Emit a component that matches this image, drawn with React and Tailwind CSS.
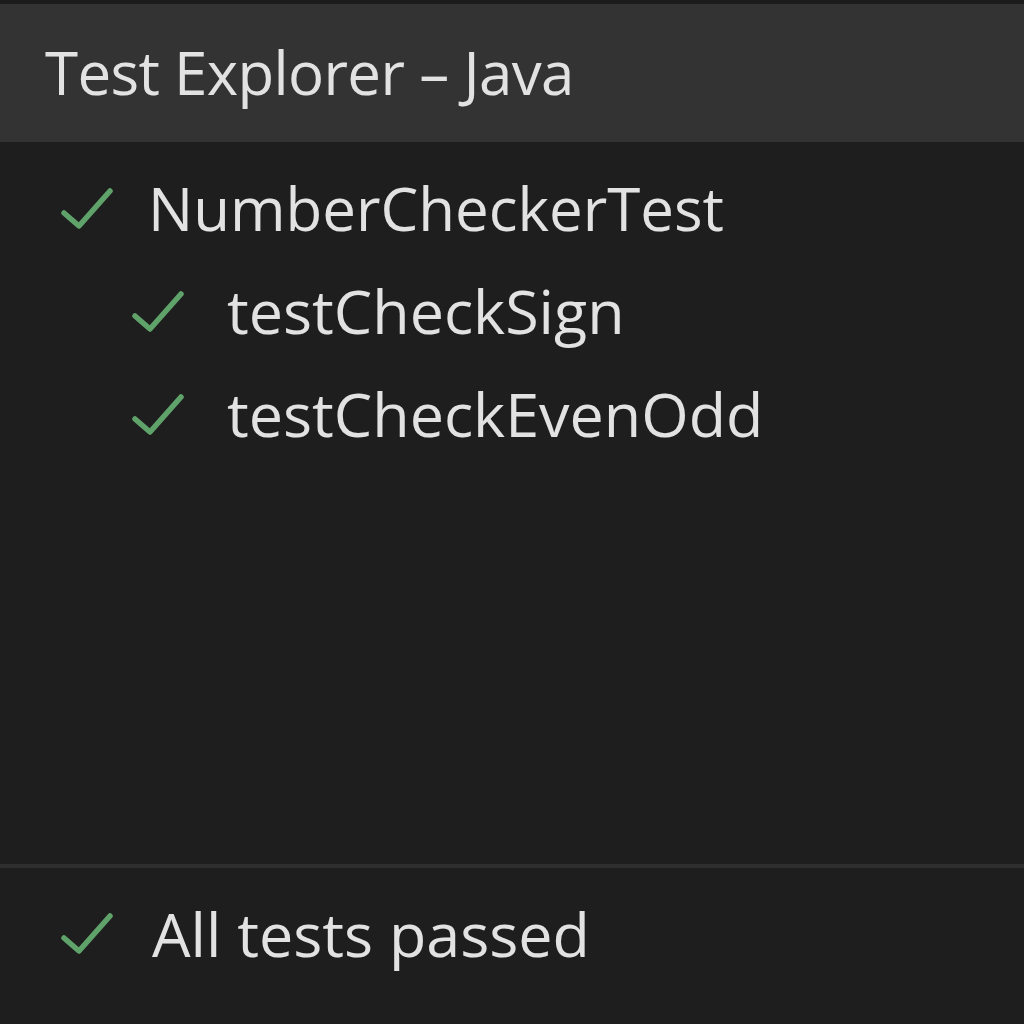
import React from "react";

const Check = ({ className }) => (
  <svg viewBox="0 0 54 42" className={className} fill="none">
    <path
      d="M4 26 L19 39 L50 4"
      stroke="#5fa36a"
      strokeWidth="5.5"
      strokeLinecap="round"
      strokeLinejoin="round"
    />
  </svg>
);

const tests = [
  { name: "testCheckSign" },
  { name: "testCheckEvenOdd" },
];

const App = () => {
  return (
    <div
      className="h-[1024px] w-[1024px] flex flex-col bg-[#1e1e1e] text-[#e2e2e2] overflow-hidden"
      style={{ fontFamily: '"Open Sans", "Noto Sans", sans-serif' }}
    >
      {/* Header */}
      <div className="border-t-4 border-[#1c1c1c] bg-[#333333] h-[142px] flex items-center pl-[45px]">
        <h1 className="text-[60px] leading-none tracking-[-0.65px] pb-[2px]">Test Explorer – Java</h1>
      </div>

      {/* Test tree */}
      <div className="flex-1 pt-[14px]">
        <div className="flex items-center h-[103px] pl-[60px]">
          <Check className="w-[54px] h-[42px] shrink-0" />
          <span className="ml-[34px] text-[60px] leading-none">NumberCheckerTest</span>
        </div>
        {tests.map((t) => (
          <div key={t.name} className="flex items-center h-[103px] pl-[131px]">
            <Check className="w-[54px] h-[42px] shrink-0" />
            <span className="ml-[42px] text-[61px] leading-none">{t.name}</span>
          </div>
        ))}
      </div>

      {/* Status */}
      <div className="border-t-4 border-[#2e2e2e] h-[160px] flex items-center pl-[60px] pb-[26px]">
        <Check className="w-[54px] h-[42px] shrink-0" />
        <span className="ml-[38px] text-[61px] leading-none">All tests passed</span>
      </div>
    </div>
  );
};

export default App;
